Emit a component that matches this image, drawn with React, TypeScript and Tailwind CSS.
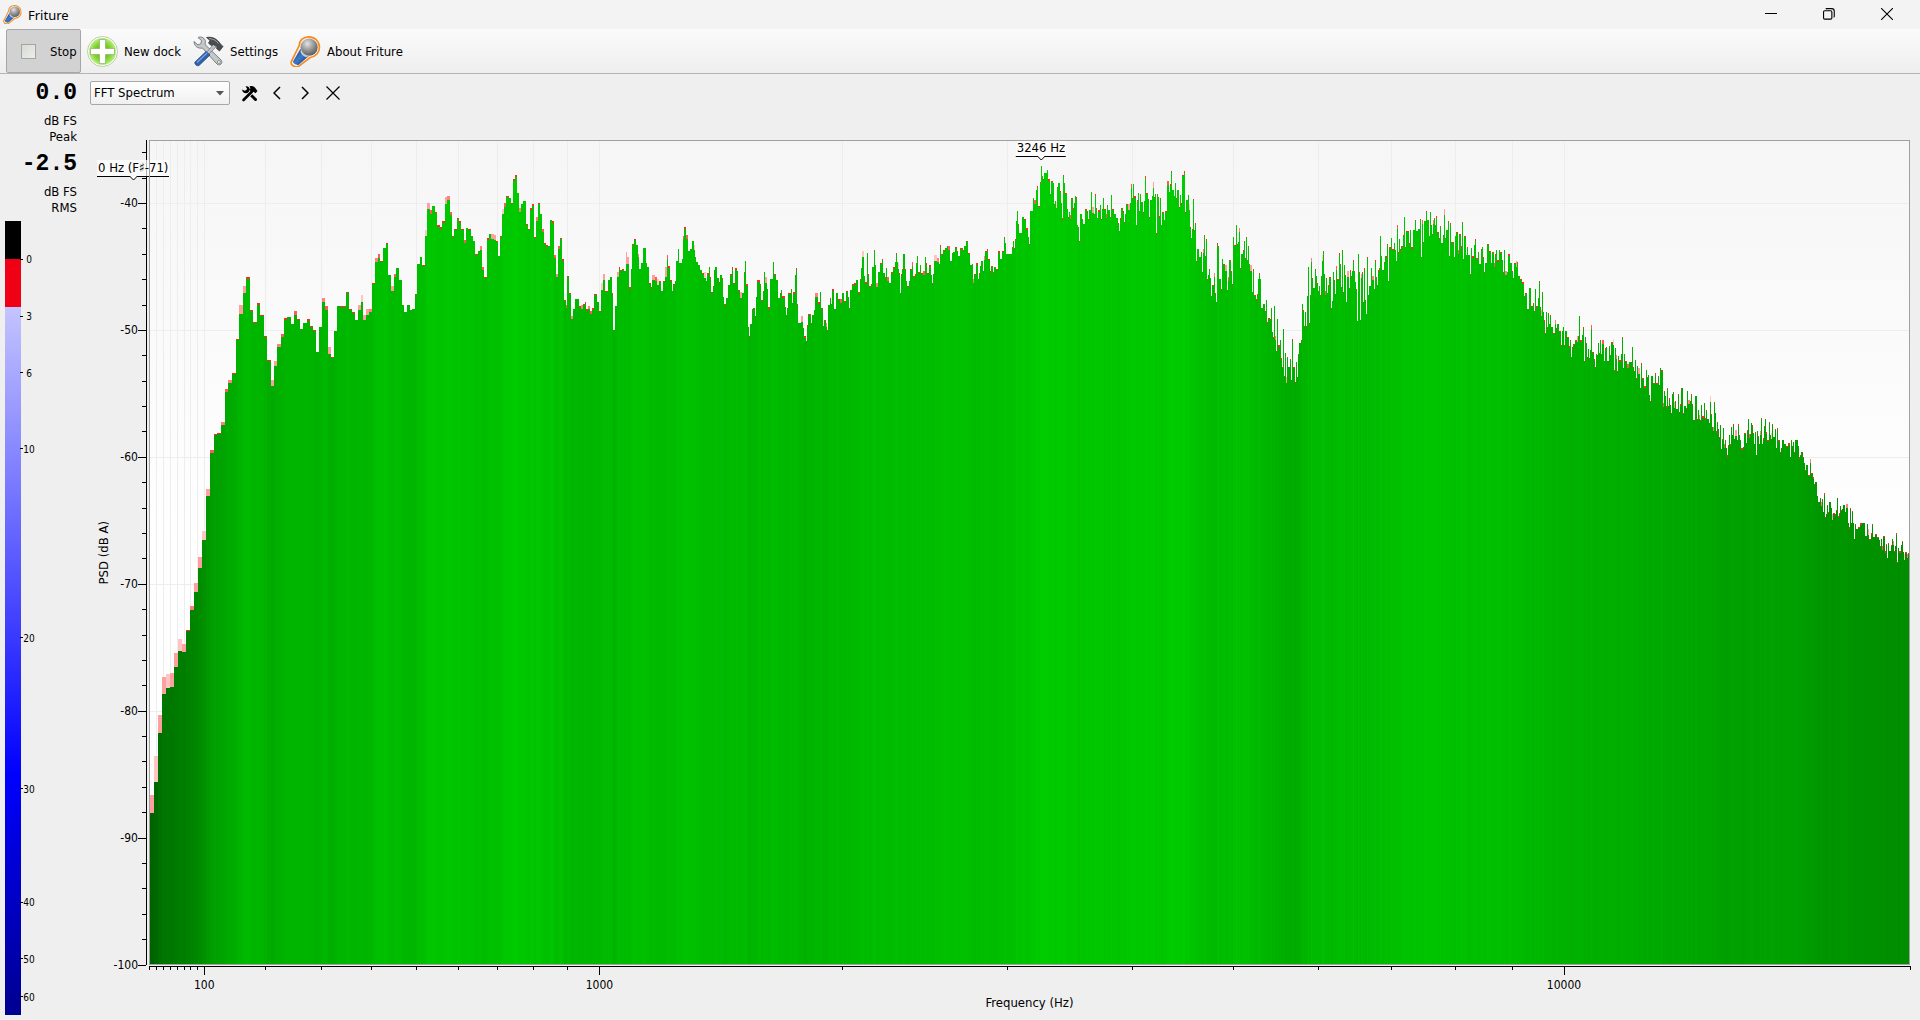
import type { ReactNode } from 'react';

// x, level, peak-hold level: one triple per FFT bin while the bins are wider than a pixel
const lowBins = [
  150, 813, 795, 154, 782, 756, 158, 733, 715, 162, 694, 677, 166, 688, 674, 170, 687, 673,
  174, 667, 653, 178, 651, 639, 182, 652, 644, 186, 631, 630, 190, 610, 606, 194, 592, 583,
  198, 568, 557, 202, 540, 531, 206, 496, 489, 210, 453, 450, 214, 435, 434, 217, 434, 433,
  221, 425, 422, 225, 392, 389, 228, 383, 380, 232, 374, 373, 236, 340, 339, 239, 314, 305,
  243, 293, 286, 246, 279, 277, 250, 311, 310, 253, 323, 322, 257, 305, 303, 260, 316, 315,
  264, 337, 336, 267, 361, 360, 271, 386, 380, 274, 366, 361, 277, 347, 344, 281, 337, 334,
  284, 320, 318, 287, 317, 317, 291, 324, 324, 294, 315, 311, 297, 320, 319, 300, 329, 329,
  303, 323, 323, 307, 321, 319, 310, 327, 326, 313, 331, 330, 316, 352, 352, 319, 327, 327,
  322, 302, 298, 325, 310, 306, 328, 354, 347, 331, 358, 357, 334, 331, 331, 337, 306, 306,
  340, 307, 306, 343, 307, 306, 346, 293, 292, 349, 310, 309, 352, 313, 312, 355, 320, 320,
  358, 310, 305, 361, 302, 295, 363, 320, 315, 366, 315, 309, 369, 312, 309, 372, 284, 283,
  375, 262, 258, 378, 258, 254, 380, 262, 261, 383, 248, 248, 386, 244, 243, 388, 275, 275,
  391, 291, 286, 394, 277, 274, 396, 268, 268, 399, 280, 280, 402, 305, 305, 404, 312, 312,
  407, 305, 305, 410, 310, 310, 412, 309, 309, 415, 295, 294, 417, 264, 264, 420, 257, 257,
  422, 266, 265, 425, 236, 230, 427, 209, 203, 430, 214, 210, 432, 206, 206, 435, 213, 212,
  437, 227, 225, 440, 229, 227, 442, 223, 221, 445, 204, 197, 447, 200, 196, 450, 215, 212,
  452, 237, 236, 454, 230, 229, 457, 219, 218, 459, 223, 221, 461, 230, 229, 464, 243, 240,
  466, 228, 228, 468, 230, 229, 471, 236, 236, 473, 241, 241, 475, 255, 254, 478, 251, 251,
  480, 250, 246, 482, 270, 267, 484, 278, 277, 487, 240, 238, 489, 234, 234, 491, 239, 234,
  494, 240, 235, 496, 242, 241, 498, 256, 256, 500, 237, 236, 502, 214, 209, 504, 207, 203,
  506, 197, 196, 509, 198, 198, 511, 204, 203, 513, 181, 179, 515, 177, 175, 517, 193, 193,
  519, 212, 208, 521, 204, 204, 523, 201, 201, 526, 225, 224, 528, 230, 229, 530, 210, 208,
  532, 206, 204, 534, 238, 237, 536, 221, 217, 538, 204, 203, 540, 214, 214, 542, 232, 229,
  544, 244, 243, 546, 247, 245, 548, 246, 246, 550, 220, 220, 552, 223, 221, 554, 258, 255,
  556, 277, 274, 558, 249, 246, 560, 239, 238, 562, 261, 259, 564, 301, 300, 566, 308, 305,
  567, 277, 276, 569, 294, 293, 571, 319, 316, 573, 309, 309, 575, 299, 299, 579, 307, 306,
  581, 309, 305, 583, 305, 304, 585, 304, 302, 586, 311, 309, 588, 309, 306, 590, 314, 311,
  592, 310, 308, 594, 295, 294, 597, 302, 302, 599, 312, 311, 601, 290, 283, 603, 280, 274,
  605, 292, 291, 608, 280, 280, 610, 277, 277, 612, 295, 293, 613, 330, 330, 615, 306, 306,
  617, 277, 272, 619, 269, 267, 620, 271, 270, 622, 270, 269, 624, 271, 271, 626, 264, 252,
  627, 264, 257, 629, 289, 287, 631, 269, 269, 632, 245, 244, 634, 240, 239, 636, 245, 245,
  638, 257, 254, 639, 269, 269, 641, 263, 263, 643, 248, 248, 646, 263, 263, 647, 267, 267,
  649, 284, 283, 651, 289, 287, 652, 280, 275, 655, 281, 277, 657, 285, 279, 659, 282, 281,
  661, 291, 291, 663, 282, 281, 665, 277, 267, 667, 259, 255, 668, 268, 266, 670, 281, 280,
  672, 291, 291, 673, 285, 284, 675, 281, 281, 676, 261, 261, 678, 249, 249, 679, 263, 263,
  682, 259, 259, 683, 239, 236, 684, 229, 227, 686, 239, 235, 688, 251, 251, 690, 249, 249,
  692, 241, 241, 694, 250, 245, 695, 257, 257, 696, 262, 262, 698, 265, 265, 700, 270, 270,
];

// x, level: bins at or below one pixel
const highBins = [
  702, 274, 704, 278, 706, 281, 707, 275, 709, 267, 710, 279, 711, 293, 713, 287, 714, 270,
  715, 267, 717, 278, 719, 283, 720, 275, 722, 279, 723, 297, 724, 305, 726, 298, 728, 285,
  730, 275, 732, 269, 733, 284, 735, 270, 737, 271, 738, 291, 740, 298, 742, 293, 744, 273,
  745, 261, 746, 286, 748, 327, 749, 337, 750, 324, 752, 310, 753, 308, 755, 317, 756, 297,
  757, 282, 760, 285, 761, 301, 763, 292, 764, 272, 765, 283, 767, 289, 768, 309, 770, 279,
  773, 262, 774, 275, 776, 280, 778, 298, 780, 294, 781, 290, 782, 298, 785, 308, 786, 315,
  787, 308, 788, 294, 791, 290, 792, 303, 793, 294, 795, 275, 796, 270, 797, 305, 798, 323,
  801, 322, 803, 328, 804, 338, 806, 341, 807, 327, 808, 315, 811, 323, 812, 315, 814, 310,
  815, 297, 818, 304, 820, 292, 821, 309, 823, 326, 824, 321, 826, 327, 827, 331, 828, 305,
  830, 299, 831, 304, 832, 291, 834, 309, 836, 293, 838, 300, 840, 303, 842, 293, 844, 302,
  846, 292, 848, 297, 849, 309, 850, 290, 852, 285, 854, 285, 856, 280, 858, 293, 860, 280,
  861, 268, 862, 257, 864, 276, 865, 284, 867, 253, 868, 276, 869, 287, 871, 285, 872, 267,
  874, 251, 875, 265, 876, 287, 878, 272, 880, 264, 882, 260, 883, 273, 885, 278, 886, 268,
  887, 281, 889, 283, 891, 273, 893, 269, 895, 262, 896, 254, 897, 262, 898, 269, 899, 274,
  900, 293, 901, 276, 902, 270, 903, 254, 905, 270, 906, 281, 907, 287, 909, 281, 910, 270,
  912, 266, 913, 277, 915, 276, 916, 264, 917, 256, 918, 273, 920, 265, 921, 274, 923, 275,
  925, 257, 926, 265, 927, 274, 929, 267, 931, 275, 932, 284, 933, 274, 934, 261, 937, 262,
  939, 264, 940, 247, 941, 255, 943, 251, 945, 248, 947, 246, 948, 250, 950, 261, 952, 254,
  953, 252, 955, 248, 957, 252, 958, 256, 960, 249, 963, 251, 964, 246, 966, 242, 967, 241,
  968, 254, 970, 265, 972, 264, 973, 283, 974, 275, 976, 265, 978, 279, 979, 274, 980, 266,
  981, 261, 983, 271, 984, 260, 985, 252, 987, 251, 988, 260, 990, 273, 991, 267, 993, 273,
  994, 267, 996, 270, 998, 253, 1000, 259, 1002, 252, 1004, 238, 1005, 243, 1006, 254,
  1011, 254, 1012, 249, 1013, 242, 1014, 248, 1015, 240, 1016, 221, 1017, 211, 1018, 225,
  1019, 233, 1022, 217, 1024, 220, 1026, 230, 1028, 237, 1029, 245, 1030, 211, 1033, 198,
  1034, 204, 1036, 190, 1037, 188, 1038, 207, 1040, 183, 1041, 166, 1042, 176, 1043, 180,
  1044, 173, 1047, 170, 1048, 181, 1050, 194, 1051, 182, 1053, 183, 1054, 205, 1055, 201,
  1056, 208, 1057, 188, 1058, 183, 1060, 192, 1061, 203, 1062, 220, 1063, 176, 1064, 183,
  1065, 194, 1067, 209, 1068, 218, 1069, 212, 1070, 219, 1071, 199, 1073, 210, 1074, 204,
  1075, 196, 1076, 198, 1077, 225, 1078, 227, 1079, 242, 1080, 214, 1082, 220, 1083, 224,
  1085, 210, 1087, 213, 1088, 220, 1089, 210, 1091, 192, 1092, 213, 1094, 214, 1095, 196,
  1096, 209, 1097, 218, 1098, 212, 1100, 205, 1101, 220, 1102, 209, 1103, 198, 1104, 210,
  1106, 218, 1107, 206, 1108, 210, 1110, 218, 1111, 195, 1112, 210, 1114, 214, 1116, 218,
  1118, 224, 1119, 231, 1120, 220, 1121, 209, 1123, 213, 1124, 223, 1125, 214, 1126, 205,
  1128, 210, 1130, 203, 1131, 188, 1132, 199, 1133, 184, 1134, 198, 1136, 225, 1137, 201,
  1138, 193, 1139, 211, 1140, 195, 1141, 202, 1143, 213, 1144, 201, 1145, 178, 1146, 194,
  1148, 200, 1149, 218, 1150, 200, 1152, 196, 1153, 188, 1154, 198, 1155, 194, 1156, 235,
  1157, 195, 1158, 197, 1159, 218, 1160, 199, 1161, 225, 1162, 213, 1164, 220, 1165, 212,
  1167, 185, 1169, 192, 1170, 186, 1171, 172, 1172, 190, 1174, 196, 1175, 183, 1176, 199,
  1177, 190, 1179, 208, 1180, 195, 1181, 205, 1182, 176, 1184, 173, 1185, 213, 1186, 200,
  1188, 195, 1189, 210, 1190, 228, 1191, 238, 1192, 231, 1193, 200, 1194, 230, 1195, 225,
  1196, 262, 1197, 249, 1199, 257, 1201, 253, 1202, 272, 1203, 253, 1204, 236, 1205, 256,
  1206, 241, 1207, 280, 1208, 275, 1209, 270, 1210, 278, 1211, 296, 1212, 286, 1214, 277,
  1215, 294, 1216, 302, 1217, 245, 1218, 247, 1219, 279, 1221, 290, 1222, 259, 1223, 265,
  1225, 271, 1227, 290, 1228, 281, 1229, 261, 1231, 273, 1232, 285, 1233, 237, 1234, 246,
  1236, 225, 1237, 245, 1238, 242, 1239, 232, 1240, 269, 1241, 254, 1243, 251, 1244, 241,
  1245, 259, 1246, 238, 1247, 260, 1248, 247, 1249, 264, 1250, 271, 1252, 292, 1253, 271,
  1254, 296, 1256, 301, 1257, 295, 1258, 279, 1259, 274, 1260, 279, 1261, 308, 1263, 304,
  1265, 312, 1266, 300, 1267, 324, 1268, 319, 1270, 320, 1271, 308, 1272, 332, 1273, 338,
  1274, 306, 1275, 340, 1276, 352, 1277, 319, 1278, 347, 1280, 340, 1281, 360, 1282, 368,
  1283, 329, 1284, 377, 1285, 353, 1286, 383, 1287, 358, 1288, 367, 1290, 360, 1291, 380,
  1292, 341, 1293, 368, 1295, 383, 1296, 362, 1297, 377, 1298, 355, 1299, 343, 1301, 341,
  1302, 304, 1303, 312, 1304, 327, 1305, 312, 1306, 327, 1307, 296, 1308, 267, 1309, 324,
  1310, 295, 1311, 262, 1312, 279, 1313, 288, 1315, 270, 1316, 276, 1317, 285, 1318, 292,
  1319, 286, 1320, 296, 1321, 276, 1322, 261, 1323, 252, 1324, 274, 1325, 295, 1326, 279,
  1327, 293, 1328, 287, 1329, 278, 1331, 309, 1332, 301, 1333, 272, 1334, 281, 1335, 294,
  1336, 270, 1337, 280, 1339, 255, 1340, 265, 1341, 287, 1342, 251, 1343, 293, 1344, 265,
  1345, 276, 1346, 302, 1347, 277, 1349, 288, 1350, 272, 1351, 277, 1352, 271, 1353, 262,
  1354, 272, 1355, 282, 1356, 290, 1357, 321, 1358, 254, 1359, 273, 1360, 320, 1361, 278,
  1362, 273, 1363, 302, 1364, 270, 1365, 301, 1366, 314, 1367, 258, 1368, 295, 1369, 286,
  1371, 268, 1372, 280, 1374, 289, 1375, 262, 1376, 278, 1377, 285, 1378, 272, 1379, 269,
  1380, 236, 1381, 257, 1382, 270, 1384, 263, 1385, 256, 1386, 258, 1387, 245, 1388, 281,
  1389, 249, 1391, 238, 1392, 250, 1394, 243, 1395, 251, 1396, 261, 1397, 229, 1398, 253,
  1399, 239, 1400, 251, 1401, 247, 1403, 236, 1404, 217, 1405, 247, 1406, 232, 1409, 244,
  1410, 230, 1411, 249, 1413, 230, 1415, 221, 1416, 231, 1418, 229, 1420, 220, 1421, 257,
  1422, 224, 1423, 243, 1424, 221, 1426, 212, 1427, 220, 1429, 236, 1430, 212, 1431, 226,
  1432, 234, 1433, 224, 1434, 219, 1435, 225, 1436, 218, 1437, 233, 1439, 239, 1440, 227,
  1441, 243, 1443, 235, 1444, 215, 1445, 239, 1446, 230, 1448, 222, 1449, 256, 1450, 225,
  1451, 243, 1454, 257, 1455, 236, 1456, 233, 1458, 254, 1459, 235, 1461, 248, 1462, 223,
  1463, 259, 1464, 237, 1466, 255, 1467, 248, 1468, 255, 1470, 275, 1471, 248, 1472, 258,
  1474, 245, 1475, 241, 1476, 259, 1478, 253, 1479, 264, 1481, 250, 1482, 247, 1483, 259,
  1484, 273, 1485, 263, 1487, 245, 1489, 252, 1491, 263, 1492, 253, 1494, 267, 1495, 255,
  1496, 250, 1497, 262, 1499, 250, 1500, 253, 1502, 260, 1503, 273, 1504, 250, 1505, 275,
  1507, 272, 1508, 256, 1510, 263, 1512, 272, 1513, 278, 1514, 264, 1516, 267, 1517, 263,
  1518, 276, 1520, 280, 1522, 284, 1524, 296, 1525, 294, 1527, 309, 1529, 288, 1531, 307,
  1533, 305, 1534, 312, 1535, 289, 1536, 307, 1538, 298, 1539, 282, 1540, 307, 1541, 316,
  1542, 293, 1543, 312, 1544, 322, 1545, 334, 1546, 312, 1547, 329, 1548, 314, 1549, 324,
  1550, 316, 1551, 327, 1553, 334, 1555, 324, 1556, 329, 1557, 324, 1559, 332, 1561, 346,
  1562, 331, 1563, 327, 1564, 346, 1565, 331, 1567, 338, 1569, 348, 1570, 341, 1571, 357,
  1572, 349, 1573, 345, 1575, 341, 1577, 342, 1578, 337, 1579, 316, 1580, 342, 1582, 335,
  1583, 329, 1584, 362, 1585, 337, 1586, 344, 1587, 357, 1588, 349, 1589, 359, 1590, 350,
  1591, 329, 1592, 353, 1594, 361, 1595, 368, 1596, 354, 1597, 356, 1598, 343, 1599, 353,
  1600, 341, 1601, 354, 1602, 344, 1604, 361, 1605, 350, 1606, 348, 1607, 361, 1609, 347,
  1610, 355, 1611, 343, 1613, 345, 1614, 371, 1615, 348, 1616, 359, 1617, 372, 1618, 356,
  1619, 362, 1621, 354, 1622, 338, 1623, 368, 1624, 354, 1625, 362, 1627, 368, 1629, 362,
  1632, 347, 1633, 368, 1634, 372, 1635, 360, 1636, 379, 1637, 366, 1638, 374, 1640, 388,
  1641, 365, 1642, 379, 1644, 388, 1646, 370, 1647, 378, 1648, 375, 1649, 395, 1650, 402,
  1651, 376, 1653, 384, 1655, 375, 1656, 384, 1658, 377, 1659, 385, 1660, 368, 1661, 371,
  1663, 407, 1664, 392, 1665, 396, 1666, 408, 1667, 389, 1668, 406, 1669, 400, 1670, 406,
  1671, 413, 1672, 395, 1673, 392, 1674, 408, 1675, 402, 1676, 409, 1678, 395, 1679, 412,
  1680, 406, 1681, 389, 1682, 388, 1683, 414, 1684, 406, 1686, 409, 1687, 391, 1688, 404,
  1690, 401, 1691, 396, 1692, 405, 1693, 420, 1695, 396, 1697, 420, 1698, 410, 1699, 419,
  1700, 421, 1701, 405, 1702, 418, 1704, 403, 1705, 420, 1706, 411, 1707, 419, 1709, 423,
  1710, 402, 1711, 415, 1712, 427, 1713, 431, 1714, 403, 1715, 413, 1716, 433, 1717, 423,
  1718, 429, 1719, 438, 1720, 425, 1721, 449, 1722, 440, 1723, 428, 1724, 448, 1725, 441,
  1726, 448, 1727, 457, 1728, 446, 1729, 435, 1730, 445, 1731, 428, 1732, 435, 1733, 425,
  1734, 439, 1735, 436, 1737, 440, 1738, 426, 1739, 436, 1740, 440, 1741, 450, 1743, 447,
  1744, 434, 1746, 443, 1747, 431, 1748, 419, 1749, 438, 1750, 435, 1751, 423, 1752, 427,
  1753, 434, 1754, 444, 1755, 433, 1756, 455, 1757, 431, 1758, 437, 1759, 444, 1760, 435,
  1761, 419, 1762, 444, 1763, 440, 1764, 427, 1765, 419, 1766, 434, 1767, 441, 1769, 423,
  1770, 435, 1771, 439, 1772, 425, 1773, 437, 1775, 430, 1776, 448, 1777, 430, 1778, 441,
  1780, 453, 1781, 448, 1782, 440, 1784, 444, 1786, 447, 1788, 445, 1790, 457, 1791, 441,
  1792, 446, 1793, 442, 1794, 453, 1795, 440, 1798, 446, 1799, 459, 1800, 456, 1801, 452,
  1803, 458, 1804, 463, 1805, 471, 1806, 465, 1808, 476, 1810, 463, 1811, 474, 1813, 479,
  1814, 485, 1815, 482, 1817, 496, 1818, 502, 1820, 498, 1821, 506, 1822, 500, 1823, 512,
  1824, 495, 1825, 518, 1826, 514, 1827, 506, 1828, 513, 1829, 502, 1831, 508, 1832, 520,
  1833, 514, 1835, 516, 1836, 511, 1837, 498, 1838, 518, 1839, 514, 1840, 506, 1841, 511,
  1842, 509, 1843, 505, 1845, 512, 1846, 508, 1848, 523, 1849, 529, 1850, 509, 1851, 523,
  1852, 512, 1853, 523, 1854, 539, 1855, 525, 1856, 529, 1858, 528, 1860, 525, 1862, 523,
  1865, 536, 1867, 524, 1868, 535, 1869, 540, 1871, 535, 1872, 525, 1873, 537, 1875, 535,
  1877, 538, 1879, 540, 1880, 547, 1881, 539, 1882, 550, 1883, 537, 1885, 553, 1886, 545,
  1887, 558, 1888, 544, 1889, 551, 1891, 546, 1892, 539, 1893, 545, 1894, 552, 1895, 546,
  1896, 535, 1897, 563, 1898, 548, 1899, 553, 1901, 545, 1902, 542, 1903, 552, 1904, 560,
  1905, 553, 1907, 558, 1908, 554,
];

interface Bin {
  x: number;
  y: number;
  peak: number;
}

const bins: Bin[] = [];
for (let i = 0; i < lowBins.length; i += 3) {
  bins.push({ x: lowBins[i], y: lowBins[i + 1], peak: lowBins[i + 2] });
}
for (let i = 0; i < highBins.length; i += 2) {
  const x = highBins[i];
  const r = (x * 7919) % 97;
  const hold = r < 40 ? 0 : r < 76 ? 1 : r < 88 ? 2 : r < 94 ? 4 : 6;
  bins.push({ x, y: highBins[i + 1], peak: highBins[i + 1] - hold });
}

const PLOT_RIGHT = 1909;
const PLOT_BOTTOM = 964;

const levelColor = (y: number) => `rgb(0 ${Math.round(233 - y * 0.165)} 0)`;

const peakColor = (hold: number, i: number) => {
  if (hold <= 2) return '#ff2a2a';
  if (hold <= 4) return i % 2 ? '#ff5a5a' : '#ff8080';
  return i % 3 === 1 ? '#ffc4c4' : '#ffa0a0';
};

// mel scale, 20 Hz to 20 kHz
const mel = (f: number) => Math.log(1 + f / 700);
const freqPos = (f: number) => ((mel(f) - mel(20)) / (mel(20000) - mel(20))) * 100;
const dbPos = (db: number) => ((-35 - db) / 65) * 100;

const majorFreqs = [100, 1000, 10000];
const freqTicks = [
  20, 30, 40, 50, 60, 70, 80, 90, 100, 200, 300, 400, 500, 600, 700, 800, 900, 1000,
  2000, 3000, 4000, 5000, 6000, 7000, 8000, 9000, 10000, 20000,
];
const dbTicks = Array.from({ length: 33 }, (_, i) => -36 - i * 2);

const meterMarks = [
  { label: '0', pos: 4.8 },
  { label: '3', pos: 12 },
  { label: '6', pos: 19.1 },
  { label: '10', pos: 28.7 },
  { label: '20', pos: 52.5 },
  { label: '30', pos: 71.5 },
  { label: '40', pos: 85.8 },
  { label: '50', pos: 92.9 },
  { label: '60', pos: 97.7 },
];

function MicIcon({ size }: { size: number }) {
  return (
    <svg width={size} height={size} viewBox="0 0 30 30" aria-hidden="true">
      <defs>
        <radialGradient id="ball" cx="0.4" cy="0.3" r="0.7">
          <stop offset="0" stopColor="#e4e4e4" />
          <stop offset="0.5" stopColor="#9c9c9c" />
          <stop offset="1" stopColor="#5e5e5e" />
        </radialGradient>
        <linearGradient id="grip" x1="0" y1="0" x2="1" y2="1">
          <stop offset="0" stopColor="#16386f" />
          <stop offset="0.5" stopColor="#3f78c8" />
          <stop offset="1" stopColor="#0f2d60" />
        </linearGradient>
      </defs>
      <path
        d="M9 9C9 4 13 .8 18 .8c6 0 10.500 4.200 10.500 10.200 0 5-3.500 9-9 9.800L9 29c-1.500 1.200-3.500 1-5 .3-2.500-1-3.500-3-2.500-5z"
        fill="#f8f0e4"
        stroke="#f58a1f"
        strokeWidth="1.600"
      />
      <path d="M10 12.500l8 7L8.500 27.800c-1.500.8-6-.8-5.500-3.300z" fill="url(#grip)" />
      <circle cx="18.500" cy="10.800" r="8.300" fill="url(#ball)" />
      <path d="M11 13c1 3.500 3.500 5.500 7 6l-2 1.500c-3-.5-5-2.500-6-5.500z" fill="#c9ccd2" />
    </svg>
  );
}

function PlusIcon() {
  return (
    <svg width="31" height="31" viewBox="0 0 31 31" aria-hidden="true">
      <defs>
        <radialGradient id="plus" cx="0.5" cy="0.5" r="0.5">
          <stop offset="0" stopColor="#55b010" />
          <stop offset="0.6" stopColor="#7ed02c" />
          <stop offset="1" stopColor="#b8ee80" />
        </radialGradient>
      </defs>
      <circle cx="15.500" cy="15.500" r="15" fill="#fff" stroke="#a9c48e" strokeWidth="0.800" />
      <circle cx="15.500" cy="15.500" r="13.500" fill="url(#plus)" />
      <path
        d="M12.500 3.500h6v9h9v6h-9v9h-6v-9h-9v-6h9z"
        fill="#fff"
        stroke="#7da858"
        strokeWidth="0.600"
      />
    </svg>
  );
}

function ToolsIcon() {
  return (
    <svg width="31" height="31" viewBox="0 0 31 31" aria-hidden="true">
      <path
        d="M1 5.500l4 3.500 3-1.500.5-3L5 1.500C8.500 0 12 2 12.500 5.500l-.5 3L27 23c2 1.500 2.500 3.500 1 5s-3.500 1-5-1L9.500 12C5 13 1 10 1 5.500z"
        fill="#c4c8c8"
        stroke="#70767a"
        strokeWidth="0.900"
      />
      <circle cx="25.800" cy="26" r="1.500" fill="#f4f4f4" stroke="#6d7376" strokeWidth="0.700" />
      <path d="M20.500 8.500L11 19l2 2L23 11z" fill="#b9c0c6" stroke="#666" strokeWidth="0.600" />
      <path
        d="M2 26L13 15.500l4 3.500L6 29.500c-2 1-5-1.500-4-3.500z"
        fill="#2f62ab"
        stroke="#1c3e77"
        strokeWidth="0.700"
      />
      <path d="M4 26.500L14 17" stroke="#7aa5df" strokeWidth="1.200" />
      <path
        d="M13.500 1.500c5-1 10 .5 14 6.500l2.500 2.500-3.500 4.500-3-2.500.5-2-3.500-2-2.500 1-2.500-2.500 1.500-2.500z"
        fill="#4a4e51"
        stroke="#2c2f31"
        strokeWidth="0.700"
      />
      <path d="M16 2.700c4 0 7 1.500 9.500 5" fill="none" stroke="#9da2a5" strokeWidth="1" />
    </svg>
  );
}

function DockToolsIcon() {
  return (
    <svg width="17" height="17" viewBox="0 0 17 17" aria-hidden="true">
      <path d="M6 6l8.500 8.500" stroke="#000" strokeWidth="3" strokeLinecap="round" />
      <path d="M1.200 4.500l2.300 1.300 2-.3.600-1.700L4.500 1.200C7 .8 9 2.500 8.800 5L5.500 8.300C3 8.500 1 7 1.200 4.500z" />
      <path d="M11 6.500L2.500 15" stroke="#efefef" strokeWidth="4.200" />
      <path d="M11 6.500L2.500 15" stroke="#000" strokeWidth="2.600" strokeLinecap="round" />
      <path d="M8.500 1.500c2.500-1 5-.3 6.500 2.500l1.500 2-2 2.200-2-1.500-1.500 1-3-3 1.500-1.500z" />
    </svg>
  );
}

function ToolButton({ icon, label }: { icon: ReactNode; label: string }) {
  return (
    <button type="button" className="flex items-center gap-1.5 px-1.5">
      {icon}
      <span className="pt-px">{label}</span>
    </button>
  );
}

function DockButton({ label, children }: { label: string; children: ReactNode }) {
  return (
    <button type="button" aria-label={label} className="flex h-6 w-7 items-center justify-center">
      {children}
    </button>
  );
}

function TitleBar() {
  return (
    <header className="flex h-[29px] items-center bg-[#f3f3f3] pl-[3px]">
      <MicIcon size={19} />
      <h1 className="ml-1.5 font-['Noto_Sans',sans-serif] text-[13px] leading-5">Friture</h1>
      <div className="mr-1 ml-auto flex h-full pb-0.5">
        <button type="button" aria-label="Minimize" className="flex w-[58px] items-center justify-center">
          <svg width="12" height="12" viewBox="0 0 12 12" stroke="#000">
            <path d="M0 5.500h12" />
          </svg>
        </button>
        <button type="button" aria-label="Restore" className="flex w-[58px] items-center justify-center">
          <svg width="12" height="12" viewBox="0 0 13 13" fill="none" stroke="#000" strokeWidth="1.200">
            <rect x="0.600" y="3" width="9" height="9" rx="1.200" />
            <path d="M3 1.200Q3.300.7 4 .7h5.500c1.800 0 2.700 1 2.700 2.700V9q0 .8-.7 1" />
          </svg>
        </button>
        <button type="button" aria-label="Close" className="flex w-[58px] items-center justify-center">
          <svg width="12" height="12" viewBox="0 0 12 12" stroke="#000" strokeWidth="1.100">
            <path d="M0 0l12 12M12 0L0 12" />
          </svg>
        </button>
      </div>
    </header>
  );
}

function Toolbar() {
  return (
    <div className="flex h-[45px] border-b border-[#b4b4b4] bg-linear-to-b from-[#fbfbfb] to-[#eeeeee] pl-1.5">
      <button
        type="button"
        aria-pressed="true"
        className="flex w-[75px] items-center gap-[14px] rounded-xs border border-[#a6a6a6] bg-[#d2d2d2] pl-[14px]"
      >
        <span className="size-[15px] border border-[#a3a59f] bg-linear-to-br from-[#d8dad5] to-[#eceee9]" />
        <span className="pt-px">Stop</span>
      </button>
      <ToolButton icon={<PlusIcon />} label="New dock" />
      <ToolButton icon={<ToolsIcon />} label="Settings" />
      <ToolButton icon={<MicIcon size={31} />} label="About Friture" />
    </div>
  );
}

function LevelReading({ value, kind }: { value: string; kind: string }) {
  return (
    <div className="pr-2 text-right leading-4">
      <p className="mb-px font-['Liberation_Mono',monospace] text-[23px] leading-[38px] font-bold">
        {value}
      </p>
      <p>dB FS</p>
      <p>{kind}</p>
    </div>
  );
}

function LevelMeter() {
  return (
    <aside className="flex w-[85px] flex-col pb-[5px]">
      <LevelReading value="0.0" kind="Peak" />
      <LevelReading value="-2.5" kind="RMS" />
      <div className="mt-[5px] ml-[5px] flex min-h-0 flex-1">
        <div className="flex w-4 flex-col">
          <div className="h-[4.8%] bg-black" />
          <div className="h-[6%] bg-[#f00014]" />
          <div className="flex-1 bg-linear-to-b/srgb from-[#c4c4ff] via-[#0000ff] via-66% to-[#000090]" />
        </div>
        <svg className="h-full w-8 overflow-visible" aria-hidden="true">
          {meterMarks.map((m) => (
            <g key={m.label}>
              <line x1="-1" x2="2" y1={`${m.pos}%`} y2={`${m.pos}%`} stroke="#000" shapeRendering="crispEdges" />
              <text x="8" y={`${m.pos}%`} dy="4" textAnchor="middle" fontSize="10">
                {m.label}
              </text>
            </g>
          ))}
        </svg>
      </div>
    </aside>
  );
}

function Marker({ label }: { label: string }) {
  return (
    <div className="relative border-b border-black bg-white/70 px-px text-[13px] leading-4 whitespace-nowrap">
      {label}
      <svg className="absolute top-full left-1/2 -ml-1" width="9" height="5" viewBox="0 0 9 5">
        <path d="M.5 0L4.500 4 8.500 0" fill="#fff" stroke="#000" />
      </svg>
    </div>
  );
}

function Spectrum() {
  return (
    <svg
      className="h-full w-full"
      viewBox="150 141 1759 823"
      preserveAspectRatio="none"
      shapeRendering="crispEdges"
      role="img"
      aria-label="FFT Spectrum"
    >
      {bins.map((bin, i) => {
        const width = (bins[i + 1]?.x ?? PLOT_RIGHT) - bin.x;
        const hold = bin.y - bin.peak;
        return (
          <g key={bin.x}>
            <rect x={bin.x} y={bin.y} width={width} height={PLOT_BOTTOM - bin.y} fill={levelColor(bin.y)} />
            {hold > 0 && (
              <rect x={bin.x} y={bin.peak} width={width} height={hold} fill={peakColor(hold, i)} />
            )}
          </g>
        );
      })}
    </svg>
  );
}

function DbAxis() {
  return (
    <svg className="h-full w-full overflow-visible" shapeRendering="crispEdges">
      <line x1="28" x2="28" y1="0" y2="100%" stroke="#000" />
      {dbTicks.map((db) => {
        const major = db % 10 === 0;
        const y = `${dbPos(db)}%`;
        return (
          <g key={db}>
            <line x1={major ? 20 : 24} x2="28" y1={y} y2={y} stroke="#000" />
            {major && (
              <text x="20" y={y} dy="4" textAnchor="end" fontSize="12">
                {db}
              </text>
            )}
          </g>
        );
      })}
    </svg>
  );
}

function FrequencyAxis() {
  return (
    <svg className="h-[29px] w-full overflow-visible" shapeRendering="crispEdges">
      <line x1="0" x2="100%" y1="1" y2="1" stroke="#000" />
      {freqTicks.map((f) => {
        const major = majorFreqs.includes(f);
        const x = `${freqPos(f)}%`;
        return (
          <g key={f}>
            <line x1={x} x2={x} y1="1" y2={major ? 10 : 5} stroke="#000" />
            {major && (
              <text x={x} y="24" textAnchor="middle" fontSize="12">
                {f}
              </text>
            )}
          </g>
        );
      })}
    </svg>
  );
}

function Plot() {
  return (
    <div className="mt-[35px] grid min-h-0 flex-1 grid-cols-[28px_31px_1fr] grid-rows-[1fr_auto] pr-2.5 pb-2">
      <div className="flex items-center justify-center">
        <span className="rotate-180 [writing-mode:vertical-rl]">PSD (dB A)</span>
      </div>
      <DbAxis />
      <div className="relative min-h-0 bg-linear-to-b from-[#f6f6f7] to-white to-50%">
        <svg className="absolute inset-0 h-full w-full" shapeRendering="crispEdges" stroke="#ededed">
          {freqTicks.map((f) => (
            <line key={f} x1={`${freqPos(f)}%`} x2={`${freqPos(f)}%`} y1="0" y2="100%" />
          ))}
          {dbTicks
            .filter((db) => db % 10 === 0)
            .map((db) => (
              <line key={db} x1="0" x2="100%" y1={`${dbPos(db)}%`} y2={`${dbPos(db)}%`} />
            ))}
        </svg>
        <div className="absolute inset-px">
          <Spectrum />
        </div>
        <div className="absolute top-0 left-[50.65%] -translate-x-1/2">
          <Marker label="3246 Hz" />
        </div>
        <div className="absolute top-5 -left-[52px]">
          <Marker label="0 Hz (F♯-71)" />
        </div>
        <div className="pointer-events-none absolute inset-0 border border-[#a0a0a0]" />
      </div>
      <div className="col-start-3 flex flex-col">
        <FrequencyAxis />
        <span className="text-center leading-[18px]">Frequency (Hz)</span>
      </div>
    </div>
  );
}

function Dock() {
  return (
    <section className="ml-[5px] flex min-w-0 flex-1 flex-col">
      <div className="flex items-center pt-[7px]">
        <div className="relative mr-[5px]">
          <select
            aria-label="Widget type"
            className="h-6 w-[140px] appearance-none rounded-xs border border-[#a8a8a8] bg-linear-to-b from-white to-[#f0f0f0] px-[3px]"
          >
            <option>FFT Spectrum</option>
          </select>
          <svg className="pointer-events-none absolute top-2.5 right-1.5" width="8" height="5" viewBox="0 0 8 5">
            <path d="M0 0h8L4 4.500z" fill="#555" />
          </svg>
        </div>
        <DockButton label="Dock settings">
          <DockToolsIcon />
        </DockButton>
        <DockButton label="Move left">
          <svg width="8" height="14" viewBox="0 0 8 14" fill="none" stroke="#000" strokeWidth="1.500">
            <path d="M7 1L1 7l6 6" />
          </svg>
        </DockButton>
        <DockButton label="Move right">
          <svg width="8" height="14" viewBox="0 0 8 14" fill="none" stroke="#000" strokeWidth="1.500">
            <path d="M1 1l6 6-6 6" />
          </svg>
        </DockButton>
        <DockButton label="Close dock">
          <svg width="14" height="14" viewBox="0 0 14 14" fill="none" stroke="#000" strokeWidth="1.200">
            <path d="M.5.5l13 13M13.500.5l-13 13" />
          </svg>
        </DockButton>
      </div>
      <Plot />
    </section>
  );
}

export default function App() {
  return (
    <div className="flex h-screen flex-col bg-[#efefef] font-['DejaVu_Sans_Condensed','DejaVu_Sans',sans-serif] text-[13px] text-black">
      <TitleBar />
      <Toolbar />
      <main className="flex min-h-0 flex-1">
        <LevelMeter />
        <Dock />
      </main>
    </div>
  );
}
